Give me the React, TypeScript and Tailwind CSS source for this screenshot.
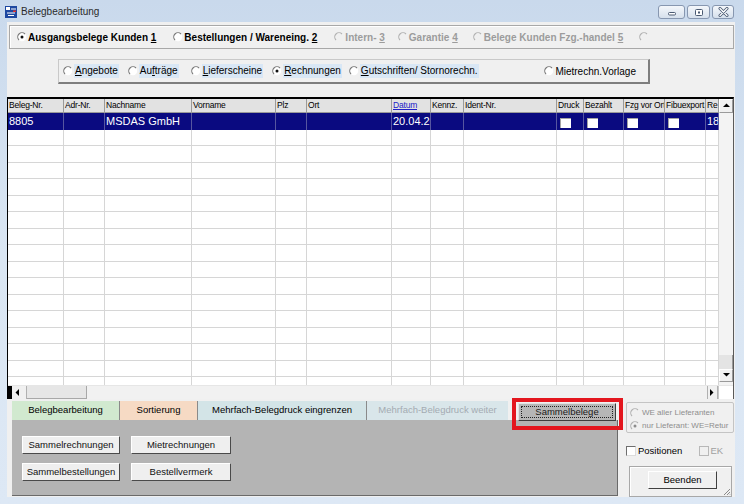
import React from 'react';

type RadioProps = { checked?: boolean; disabled?: boolean };

function Radio({ checked = false, disabled = false }: RadioProps) {
  const arc = disabled ? '#b0b0b0' : '#767676';
  return (
    <svg width="10" height="10" viewBox="0 0 10 10" className="shrink-0">
      <circle cx="5" cy="5" r="4.2" fill={disabled ? '#f0f0f0' : '#ffffff'} />
      <path d="M2 8 A4.2 4.2 0 0 1 8 2" fill="none" stroke={arc} strokeWidth="1.1" />
      {checked && <circle cx="5" cy="5" r="1.5" fill={disabled ? '#8c8c8c' : '#111111'} />}
    </svg>
  );
}

function CheckBox({ disabled = false }: { disabled?: boolean }) {
  return (
    <span
      className={`block w-[10px] h-[10px] shrink-0 border-t border-l border-r border-b ${
        disabled ? 'border-[#b8b8b8] bg-[#f0f0f0]' : 'border-t-[#6e6e6e] border-l-[#6e6e6e] border-r-[#dcdcdc] border-b-[#dcdcdc] bg-white'
      }`}
    />
  );
}

function Arrow({ dir }: { dir: 'up' | 'down' | 'left' | 'right' }) {
  const pts = {
    up: '1,5 4.5,1.5 8,5',
    down: '1,2 4.5,5.5 8,2',
    left: '5,1 1.5,4.5 5,8',
    right: '2,1 5.5,4.5 2,8',
  }[dir];
  return (
    <svg width="9" height="9" viewBox="0 0 9 9">
      <polygon points={pts} fill="#000" />
    </svg>
  );
}

function Item({ ml, checked, disabled, children }: { ml: string; checked?: boolean; disabled?: boolean; children: React.ReactNode }) {
  return (
    <div className={`flex items-center ${ml}`}>
      <Radio checked={checked} disabled={disabled} />
      <span className={`ml-[1px] whitespace-nowrap ${disabled ? 'text-[#9c9c9c]' : ''}`}>{children}</span>
    </div>
  );
}

function DocItem({ ml, checked, children }: { ml: string; checked?: boolean; children: React.ReactNode }) {
  return (
    <div className={`flex items-center ${ml}`}>
      <Radio checked={checked} />
      <span className="ml-[1px] px-[1px] leading-[14px] bg-[#d9e7f5] whitespace-nowrap">{children}</span>
    </div>
  );
}

const cols = [
  { label: 'Beleg-Nr.', w: 'w-[56px]' },
  { label: 'Adr-Nr.', w: 'w-[41px]' },
  { label: 'Nachname', w: 'w-[87px]' },
  { label: 'Vorname', w: 'w-[84px]' },
  { label: 'Plz', w: 'w-[31px]' },
  { label: 'Ort', w: 'w-[85px]' },
  { label: 'Datum', w: 'w-[39px]' },
  { label: 'Kennz.', w: 'w-[33px]' },
  { label: 'Ident-Nr.', w: 'w-[93px]' },
  { label: 'Druck', w: 'w-[27px]' },
  { label: 'Bezahlt', w: 'w-[40px]' },
  { label: 'Fzg vor Ort', w: 'w-[41px]' },
  { label: 'Fibuexport', w: 'w-[41px]' },
  { label: 'Re', w: 'w-[13px]' },
];

const selected = ['8805', '', 'MSDAS GmbH', '', '', '', '20.04.2019', '', '', 'x', 'x', 'x', 'x', '18'];

function WinButton({ w, children }: { w: string; children: React.ReactNode }) {
  return (
    <div
      className={`${w} h-[14px] rounded-[3px] border border-[#8797b0] bg-gradient-to-b from-[#f4f7fb] to-[#d6e0ec] flex items-center justify-center`}
    >
      {children}
    </div>
  );
}

function PanelButton({ w, children }: { w: string; children: React.ReactNode }) {
  return (
    <div
      className={`${w} h-[18px] bg-[#efefef] border-t border-l border-white border-r border-b border-r-[#4a4a4a] border-b-[#4a4a4a] flex items-center justify-center text-[9.5px] text-[#111]`}
    >
      {children}
    </div>
  );
}

export default function App() {
  return (
    <div className="w-[744px] h-[504px] overflow-hidden flex flex-col bg-gradient-to-b from-[#c9d9ec] via-[#dae6f3] to-[#dde8f5] font-['Liberation_Sans',Arial,sans-serif] text-black">
      {/* Title bar */}
      <div className="h-[22px] shrink-0 flex items-start">
        <svg width="12" height="12" viewBox="0 0 12 12" className="ml-[5px] mt-[6px]">
          <rect x="0" y="0" width="12" height="12" fill="#1d47a0" />
          <rect x="1" y="1" width="4" height="3" fill="#ffffff" />
          <path d="M6 3 L11 3 M2 7 L10 7 M3 9.5 L9 9.5" stroke="#ffffff" strokeWidth="1" />
          <rect x="8" y="4.5" width="3" height="1.5" fill="#e03030" />
        </svg>
        <span className="ml-[4px] mt-[6px] text-[10px] leading-[12px] text-[#2b2b2b]">Belegbearbeitung</span>
        <div className="ml-auto mr-[10px] mt-[5px] flex gap-[2px]">
          <WinButton w="w-[27px]">
            <svg width="10" height="8" viewBox="0 0 10 8">
              <rect x="1.5" y="4.5" width="7" height="2.5" rx="1" fill="#fff" stroke="#4a5a72" />
            </svg>
          </WinButton>
          <WinButton w="w-[23px]">
            <svg width="10" height="9" viewBox="0 0 10 9">
              <rect x="1.5" y="1.5" width="7" height="6" rx="1" fill="#fff" stroke="#4a5a72" />
              <rect x="4" y="3.5" width="2" height="2" fill="#4a5a72" />
            </svg>
          </WinButton>
          <WinButton w="w-[22px]">
            <svg width="11" height="10" viewBox="0 0 11 10">
              <path d="M2 1.5 L9 8.5 M9 1.5 L2 8.5" stroke="#4a5a72" strokeWidth="3" strokeLinecap="round" />
              <path d="M2 1.5 L9 8.5 M9 1.5 L2 8.5" stroke="#ffffff" strokeWidth="1.3" strokeLinecap="round" />
            </svg>
          </WinButton>
        </div>
      </div>

      {/* Window body */}
      <div className="flex-1 flex pl-[7px] pr-[9px] pb-[7px]">
        <div className="w-[728px] h-[475px] bg-[#f0f0f0] flex flex-col">
          {/* Belegarten */}
          <div className="mt-[3px] ml-[2px] mr-[1px] h-[24px] shrink-0 flex items-center border border-[#a8a8a8] shadow-[inset_1px_1px_0_#ffffff] pl-[7px] text-[10px] font-bold">
            <Item ml="ml-0" checked>
              Ausgangsbelege Kunden <span className="underline">1</span>
            </Item>
            <Item ml="ml-[17px]">
              Bestellungen / Wareneing. <span className="underline">2</span>
            </Item>
            <Item ml="ml-[17px]" disabled>
              Intern- <span className="underline">3</span>
            </Item>
            <Item ml="ml-[13px]" disabled>
              Garantie <span className="underline">4</span>
            </Item>
            <Item ml="ml-[15px]" disabled>
              Belege Kunden Fzg.-handel <span className="underline">5</span>
            </Item>
            <div className="ml-[16px] flex items-center">
              <Radio disabled />
            </div>
          </div>

          {/* Dokumenttyp */}
          <div className="mt-[10px] ml-[51px] w-[592px] h-[25px] shrink-0 flex items-center border-t border-l border-[#c9c9c9] border-r-2 border-b-2 border-r-[#7e7e7e] border-b-[#7e7e7e] pl-[4px] pr-[12px] text-[10px]">
            <DocItem ml="ml-0">
              <span className="underline">A</span>ngebote
            </DocItem>
            <DocItem ml="ml-[9px]">
              Au<span className="underline">f</span>träge
            </DocItem>
            <DocItem ml="ml-[12px]">
              <span className="underline">L</span>ieferscheine
            </DocItem>
            <DocItem ml="ml-[9px]" checked>
              <span className="underline">R</span>echnungen
            </DocItem>
            <DocItem ml="ml-[7px]">
              <span className="underline">G</span>utschriften/ Stornorechn.
            </DocItem>
            <div className="ml-auto flex items-center">
              <Radio />
              <span className="ml-[1px] whitespace-nowrap">Mietrechn.Vorlage</span>
            </div>
          </div>

          {/* Grid */}
          <div className="mt-[13px] mr-[1px] h-[302px] shrink-0 flex flex-col border-t-2 border-l border-black border-r border-r-[#5a5a5a] bg-white">
            <div className="h-[286px] flex">
              <div className="w-[711px] flex flex-col overflow-hidden">
                {/* header */}
                <div className="h-[14px] shrink-0 flex bg-[#e2e2e2] border-b border-[#9a9a9a] text-[8.5px] leading-[13px] tracking-[-0.2px]">
                  {cols.map((c) => (
                    <div
                      key={c.label}
                      className={`${c.w} shrink-0 border-r border-[#9a9a9a] pl-[1px] overflow-hidden whitespace-nowrap ${
                        c.label === 'Datum' ? 'text-[#2020c8] underline' : ''
                      }`}
                    >
                      {c.label}
                    </div>
                  ))}
                </div>
                {/* selected row */}
                <div className="h-[16.5px] shrink-0 flex bg-[#0a0a80] text-white text-[11px] leading-[16px]">
                  {cols.map((c, i) => (
                    <div key={c.label} className={`${c.w} shrink-0 border-r border-[#5656a0] pl-[1px] overflow-hidden whitespace-nowrap`}>
                      {selected[i] === 'x' ? (
                        <span className="block w-[11px] h-[10px] mt-[5px] ml-[2px] bg-white border-t border-l border-[#a4a4a4]" />
                      ) : (
                        selected[i]
                      )}
                    </div>
                  ))}
                </div>
                {/* empty rows */}
                {[...Array(16)].map((_, r) => (
                  <div key={r} className="h-[16.5px] shrink-0 flex">
                    {cols.map((c) => (
                      <div key={c.label} className={`${c.w} shrink-0 border-r border-b border-[#d6d6d6]`} />
                    ))}
                  </div>
                ))}
              </div>
              {/* vertical scrollbar */}
              <div className="w-[14px] flex flex-col bg-[#f3f3f3]">
                <div className="h-[14px] flex items-center justify-center bg-[#f0f0f0] border-t border-l border-white border-r border-b border-r-[#9a9a9a] border-b-[#9a9a9a]">
                  <Arrow dir="up" />
                </div>
                <div className="flex-1" />
                <div className="h-[14px] bg-[#e4e4e4] border-r border-[#9a9a9a]" />
                <div className="h-[13px] flex items-center justify-center bg-[#f0f0f0] border-t border-l border-white border-r border-b border-r-[#9a9a9a] border-b-[#9a9a9a]">
                  <Arrow dir="down" />
                </div>
                <div className="h-[3px]" />
              </div>
            </div>
            {/* horizontal scrollbar */}
            <div className="h-[14px] flex bg-[#f1f1f1] border-t border-[#e6e6e6]">
              <div className="w-[4px] bg-black" />
              <div className="w-[15px] flex items-center pl-[2px] bg-[#f0f0f0] border-r border-[#b0b0b0]">
                <Arrow dir="left" />
              </div>
              <div className="w-[60px] bg-[#e6e6e6] border-r border-b border-[#a8a8a8]" />
              <div className="flex-1" />
              <div className="w-[11px] flex items-center justify-center bg-[#f0f0f0] border-l border-r border-[#b0b0b0]">
                <Arrow dir="right" />
              </div>
              <div className="w-[15px] bg-white border-l border-[#c8c8c8]" />
            </div>
          </div>

          {/* Bottom area */}
          <div className="relative flex-1 flex">
            <div className="ml-[5px] w-[606px] flex flex-col">
              <div className="mt-[2px] h-[19px] shrink-0 flex text-[9.5px]">
                <div className="w-[108px] flex items-center justify-center bg-[#d1e9cf] border-r border-[#8a8a8a]">Belegbearbeitung</div>
                <div className="w-[78px] flex items-center justify-center bg-[#f6dac4] border-r border-[#8a8a8a]">Sortierung</div>
                <div className="w-[169px] flex items-center justify-center bg-[#d3e4e7] border-r border-[#8a8a8a]">
                  Mehrfach-Belegdruck eingrenzen
                </div>
                <div className="w-[141px] flex items-center justify-center bg-[#d9e6ea] text-[#a4abb2]">Mehrfach-Belegdruck weiter</div>
                <div className="ml-[10px] mt-[2px] w-[98px] h-[18px] p-[2px] bg-[#b6b6b6] border-t border-l border-[#e2e2e2] border-r border-b border-r-[#3e3e3e] border-b-[#3e3e3e] relative z-10">
                  <div className="h-full border border-dotted border-[#222] flex items-center justify-center text-[#1a1a1a]">
                    Sammelbelege
                  </div>
                </div>
              </div>
              <div className="flex-1 mb-[1px] bg-[#b4b4b4] border-r border-b border-[#6a6a6a] pt-[16px] pl-[10px] flex flex-col gap-[9px]">
                <div className="flex gap-[11px]">
                  <PanelButton w="w-[98px]">Sammelrechnungen</PanelButton>
                  <PanelButton w="w-[100px]">Mietrechnungen</PanelButton>
                </div>
                <div className="flex gap-[11px]">
                  <PanelButton w="w-[98px]">Sammelbestellungen</PanelButton>
                  <PanelButton w="w-[100px]">Bestellvermerk</PanelButton>
                </div>
              </div>
            </div>

            {/* right column */}
            <div className="ml-[8px] w-[108px] flex flex-col">
              <div className="mt-[3px] h-[31px] shrink-0 border border-[#c4c4c4] rounded-[2px] pt-[3px] pl-[3px] text-[8px] text-[#8e8e8e]">
                <div className="h-[13px] flex items-center gap-[2px]">
                  <Radio disabled />
                  <span className="whitespace-nowrap">WE aller Lieferanten</span>
                </div>
                <div className="h-[13px] flex items-center gap-[2px]">
                  <Radio checked disabled />
                  <span className="whitespace-nowrap">nur Lieferant: WE=Retur</span>
                </div>
              </div>
              <div className="mt-[11px] h-[14px] shrink-0 flex items-center text-[9.5px]">
                <CheckBox />
                <span className="ml-[2px]">Positionen</span>
                <span className="ml-[17px]">
                  <CheckBox disabled />
                </span>
                <span className="ml-[1px] text-[#a0a0a0]">EK</span>
              </div>
              <div className="relative mt-[8px] ml-[3px] w-[103px] h-[31px] shrink-0 border border-[#a8a8a8] shadow-[inset_1px_1px_0_#ffffff] pt-[4px] pl-[18px]">
                <div className="w-[69px] h-[18px] bg-[#f0f0f0] border-t border-l border-white border-r border-b border-r-[#404040] border-b-[#404040] flex items-center justify-center text-[9.5px]">
                  Beenden
                </div>
                <svg width="9" height="9" viewBox="0 0 9 9" className="absolute right-0 bottom-0">
                  <path d="M8 2 L2 8 M8 5 L5 8 M8 7.5 L7.5 8" stroke="#8a8a8a" strokeWidth="1" />
                </svg>
              </div>
            </div>

            {/* highlight annotation */}
            <div className="absolute left-[505px] top-[-1px] w-[111px] h-[32px] border-4 border-[#e3161e] pointer-events-none z-20" />
          </div>
        </div>
      </div>
    </div>
  );
}
